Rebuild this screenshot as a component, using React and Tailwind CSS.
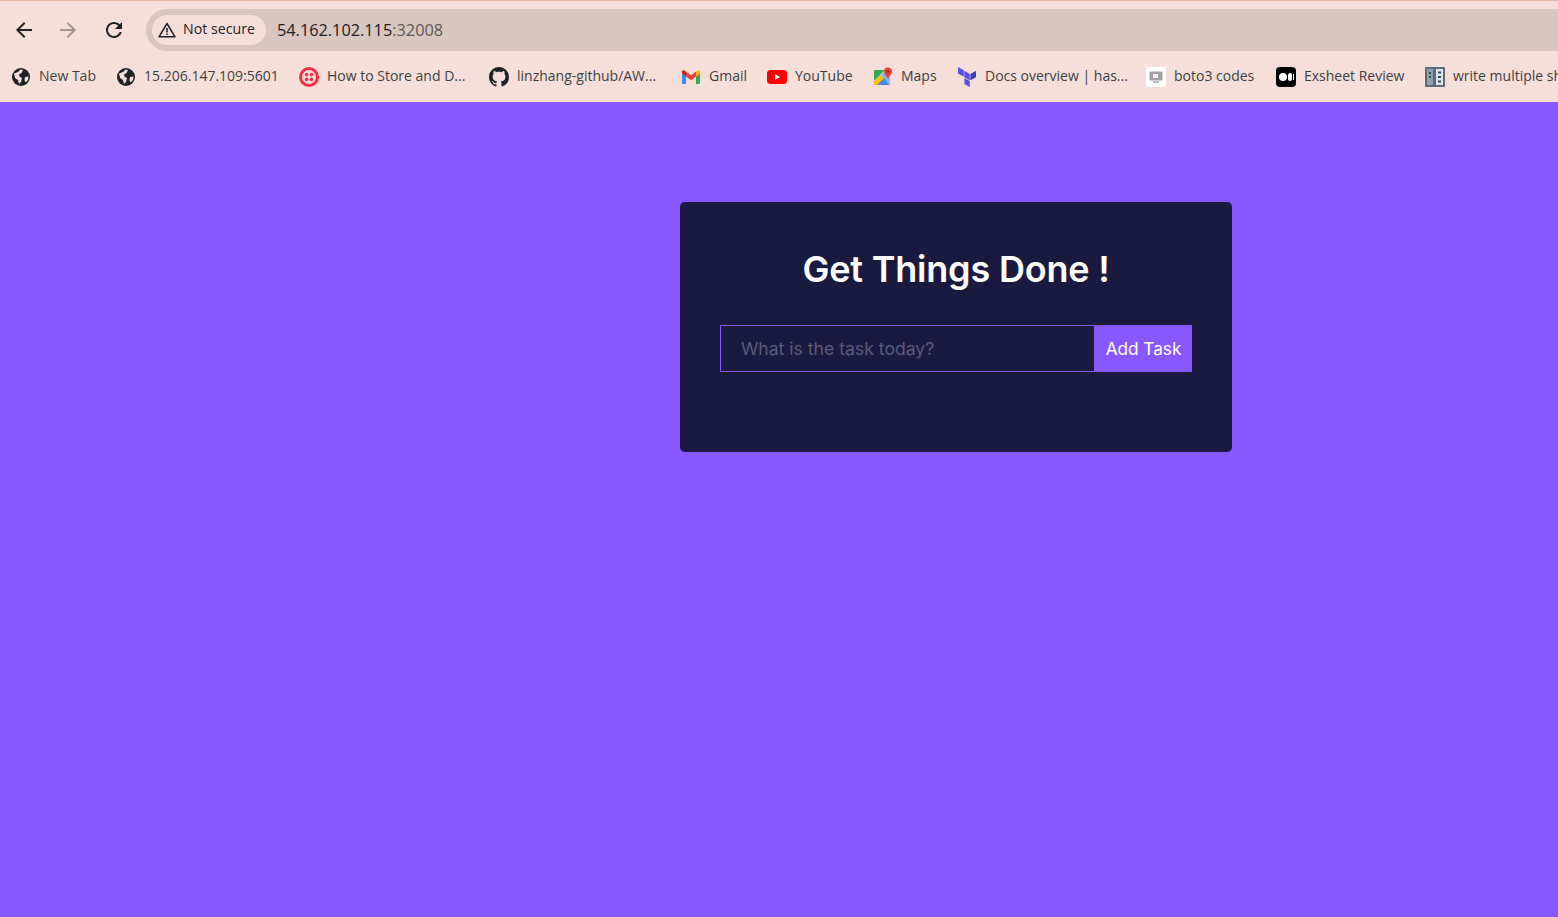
import React from 'react';

const NavIcon = ({ d, className }) => (
  <svg width="24" height="24" viewBox="0 0 24 24" className={className} fill="currentColor">
    <path d={d} />
  </svg>
);

const GlobeIcon = () => (
  <svg width="20" height="20" viewBox="0 0 20 20">
    <circle cx="10" cy="10" r="9" fill="#202124" />
    <path d="M3 6.5 L7 5 L9.5 2.5 L12 3 L10.5 6 L8 7.5 L8.5 9.5 L11 11 L10 15 L8 17 L7 13 L4 11 Z" fill="#f6dfd9" />
    <path d="M14 10 L17.5 9.5 L17 13 L14.5 15.5 L13.5 13 Z" fill="#f6dfd9" />
  </svg>
);

const TwilioIcon = () => (
  <svg width="20" height="20" viewBox="0 0 20 20">
    <circle cx="10" cy="10" r="8.5" fill="none" stroke="#f22f46" strokeWidth="3" />
    <circle cx="7.6" cy="7.6" r="1.8" fill="#f22f46" />
    <circle cx="12.4" cy="7.6" r="1.8" fill="#f22f46" />
    <circle cx="7.6" cy="12.4" r="1.8" fill="#f22f46" />
    <circle cx="12.4" cy="12.4" r="1.8" fill="#f22f46" />
  </svg>
);

const GithubIcon = () => (
  <svg width="20" height="20" viewBox="0 0 16 16" fill="#202124">
    <path d="M8 0C3.58 0 0 3.58 0 8c0 3.54 2.29 6.53 5.47 7.59.4.07.55-.17.55-.38 0-.19-.01-.82-.01-1.49-2.01.37-2.53-.49-2.69-.94-.09-.23-.48-.94-.82-1.13-.28-.15-.68-.52-.01-.53.63-.01 1.08.58 1.23.82.72 1.21 1.87.87 2.33.66.07-.52.28-.87.51-1.07-1.78-.2-3.64-.89-3.64-3.95 0-.87.31-1.59.82-2.15-.08-.2-.36-1.02.08-2.12 0 0 .67-.21 2.2.82.64-.18 1.32-.27 2-.27s1.36.09 2 .27c1.53-1.04 2.2-.82 2.2-.82.44 1.1.16 1.92.08 2.12.51.56.82 1.27.82 2.15 0 3.07-1.87 3.75-3.65 3.95.29.25.54.73.54 1.48 0 1.07-.01 1.93-.01 2.2 0 .21.15.46.55.38A8.01 8.01 0 0 0 16 8c0-4.42-3.58-8-8-8z" />
  </svg>
);

const GmailIcon = () => (
  <svg width="18" height="14" viewBox="0 0 18 14">
    <path d="M0 3 V12.5 Q0 14 1.5 14 H4 V6.5 Z" fill="#4285f4" />
    <path d="M18 3 V12.5 Q18 14 16.5 14 H14 V6.5 Z" fill="#34a853" />
    <path d="M14 1.5 L14 6.5 L18 3.5 V1.5 Q18 0 16 0.2 Z" fill="#fbbc04" />
    <path d="M4 6.5 V1.5 L9 5.3 L14 1.5 V6.5 L9 10.2 Z" fill="#ea4335" />
    <path d="M0 3.5 V1.5 Q0 0 2 0.2 L4 1.5 V6.5 Z" fill="#c5221f" />
  </svg>
);

const YoutubeIcon = () => (
  <svg width="20" height="14" viewBox="0 0 20 14">
    <rect width="20" height="14" rx="3.5" fill="#ff0000" />
    <path d="M8 4 L13 7 L8 10 Z" fill="#fff" />
  </svg>
);

const MapsIcon = () => (
  <svg width="20" height="20" viewBox="0 0 20 20">
    <path d="M1 4 Q1 3 2 3 H12 L1 14 Z" fill="#34a853" />
    <path d="M1 14 L8 8 L16 18 H2 Q1 18 1 17 Z" fill="#fbbc04" />
    <path d="M8 8 L12 4 L17 10 V17 Q17 18 16 18 Z" fill="#8ab4f8" />
    <path d="M4 18 L11 11 L16 18 Z" fill="#4285f4" />
    <path d="M15 0.5 A4 4 0 0 1 19 4.5 C19 7.5 16 9 15 12 C14 9 11 7.5 11 4.5 A4 4 0 0 1 15 0.5 Z" fill="#ea4335" />
    <circle cx="15" cy="4.5" r="1.4" fill="#a52714" />
  </svg>
);

const TerraformIcon = () => (
  <svg width="18" height="20" viewBox="0 0 18 20">
    <path d="M0 0 L5.8 3.3 V9.8 L0 6.5 Z" fill="#5c4ee5" />
    <path d="M6.4 3.7 L11.8 6.9 V13.3 L6.4 10.2 Z" fill="#5c4ee5" />
    <path d="M12.4 6.9 L18 3.7 V10.2 L12.4 13.3 Z" fill="#4040b2" />
    <path d="M6.4 11 L11.8 14.1 V20 L6.4 17 Z" fill="#5c4ee5" />
  </svg>
);

const BotoIcon = () => (
  <span className="w-5 h-5 bg-white flex items-center justify-center">
    <svg width="14" height="14" viewBox="0 0 14 14">
      <rect x="0.5" y="1.5" width="13" height="9" rx="1" fill="#a3a3a3" />
      <rect x="4" y="4" width="5" height="4" fill="#f1f1f1" />
      <rect x="4" y="11" width="6" height="2" fill="#bdbdbd" />
    </svg>
  </span>
);

const ExsheetIcon = () => (
  <span className="w-5 h-5 bg-black rounded-sm flex items-center justify-center gap-px">
    <span className="w-2 h-2 rounded-full bg-white" />
    <span className="w-1 h-2 rounded-full bg-white" />
    <span className="w-px h-1.5 bg-white" />
  </span>
);

const WriteIcon = () => (
  <svg width="20" height="20" viewBox="0 0 20 20">
    <rect width="20" height="20" rx="1" fill="#5b6b78" />
    <rect x="2" y="2" width="6" height="16" fill="#8fa0ad" />
    <rect x="11" y="2" width="7" height="16" fill="#dfe5ea" />
    <rect x="13" y="4.5" width="3" height="2" fill="#37474f" />
    <rect x="13" y="9" width="3" height="2" fill="#37474f" />
    <rect x="13" y="13.5" width="3" height="2" fill="#37474f" />
    <rect x="4" y="5" width="2" height="2" fill="#37474f" />
    <rect x="4" y="9" width="2" height="2" fill="#37474f" />
  </svg>
);

const bookmarks = [
  { label: 'New Tab', icon: <GlobeIcon />, width: 'w-[105px]' },
  { label: '15.206.147.109:5601', icon: <GlobeIcon />, width: 'w-[183px]' },
  { label: 'How to Store and D...', icon: <TwilioIcon />, width: 'w-[190px]' },
  { label: 'linzhang-github/AW...', icon: <GithubIcon />, width: 'w-[192px]' },
  { label: 'Gmail', icon: <GmailIcon />, width: 'w-[86px]' },
  { label: 'YouTube', icon: <YoutubeIcon />, width: 'w-[106px]' },
  { label: 'Maps', icon: <MapsIcon />, width: 'w-[84px]' },
  { label: 'Docs overview | has...', icon: <TerraformIcon />, width: 'w-[189px]' },
  { label: 'boto3 codes', icon: <BotoIcon />, width: 'w-[130px]' },
  { label: 'Exsheet Review', icon: <ExsheetIcon />, width: 'w-[149px]' },
  { label: 'write multiple sheets', icon: <WriteIcon />, width: 'w-[160px]' },
];

const BrowserChrome = () => (
  <div className="h-[102px] shrink-0 bg-[#f6dfd9] border-t-[1px] border-[#eab1a0] overflow-hidden font-['Open_Sans','Roboto',sans-serif]">
    <div className="h-[50px] pt-2 flex items-start">
      <div className="flex items-center h-[42px] pl-3 w-[146px] shrink-0">
        <NavIcon className="text-[#202124]" d="M20 11H7.83l5.59-5.59L12 4l-8 8 8 8 1.41-1.41L7.83 13H20v-2z" />
        <NavIcon className="text-[#a39690] ml-5" d="M4 11h12.17l-5.59-5.59L12 4l8 8-8 8-1.41-1.41L16.17 13H4v-2z" />
        <NavIcon className="text-[#202124] ml-[22px]" d="M17.65 6.35C16.2 4.9 14.21 4 12 4c-4.42 0-7.99 3.58-7.99 8s3.57 8 7.99 8c3.73 0 6.84-2.55 7.73-6h-2.08c-.82 2.33-3.04 4-5.65 4-3.31 0-6-2.69-6-6s2.69-6 6-6c1.66 0 3.14.69 4.22 1.78L13 11h7V4l-2.35 2.35z" />
      </div>
      <div className="flex-1 h-[42px] bg-[#d8c6bf] rounded-l-full flex items-center pl-[6px]">
        <div className="h-[30px] w-[114px] bg-[#f6dfd9] rounded-full flex items-center pl-[6px] gap-[7px] text-[#202124]">
          <svg width="18" height="16" viewBox="0 0 18 16" className="shrink-0">
            <path d="M9 1.5 L17 14.8 H1 Z" fill="none" stroke="#202124" strokeWidth="1.5" strokeLinejoin="round" />
            <path d="M9 6 V10.5 M9 11.6 V13" stroke="#202124" strokeWidth="1.5" />
          </svg>
          <span className="text-[14.2px] whitespace-nowrap pb-[2px]">Not secure</span>
        </div>
        <span className="ml-[11px] text-[16.3px] text-[#202124]">
          54.162.102.115<span className="text-[#5f5753]">:32008</span>
        </span>
      </div>
    </div>
    <div className="h-[51px] flex items-center pl-[11px] pt-[1px] whitespace-nowrap">
      {bookmarks.map((b) => (
        <div key={b.label} className={`flex items-center gap-2 shrink-0 ${b.width}`}>
          <span className="w-5 h-5 flex items-center justify-center shrink-0">{b.icon}</span>
          <span className="text-[14px] text-[#3c4043] pb-[3px]">{b.label}</span>
        </div>
      ))}
    </div>
  </div>
);

export default function App() {
  return (
    <div className="h-[917px] flex flex-col bg-[#8758ff] overflow-hidden">
      <BrowserChrome />
      <main className="flex-1 flex justify-center pl-[354px] pt-[100px] font-['Inter','Open_Sans',sans-serif]">
        <div className="w-[552px] h-[250px] bg-[#1a1a40] rounded-[5px] px-10 pt-10">
          <h1 className="h-[54px] text-center text-white text-[36px] font-semibold leading-[54px] tracking-[-0.2px]">
            Get Things Done !
          </h1>
          <form className="mt-[29px] flex h-[47px]">
            <input
              type="text"
              placeholder="What is the task today?"
              className="flex-1 min-w-0 bg-transparent border border-[#8758ff] pl-5 pt-[1px] text-[17.6px] text-white placeholder:text-[#5c5b78] outline-none"
            />
            <button type="button" className="w-[97px] bg-[#8758ff] text-white text-[17.2px]">
              Add Task
            </button>
          </form>
        </div>
      </main>
    </div>
  );
}
